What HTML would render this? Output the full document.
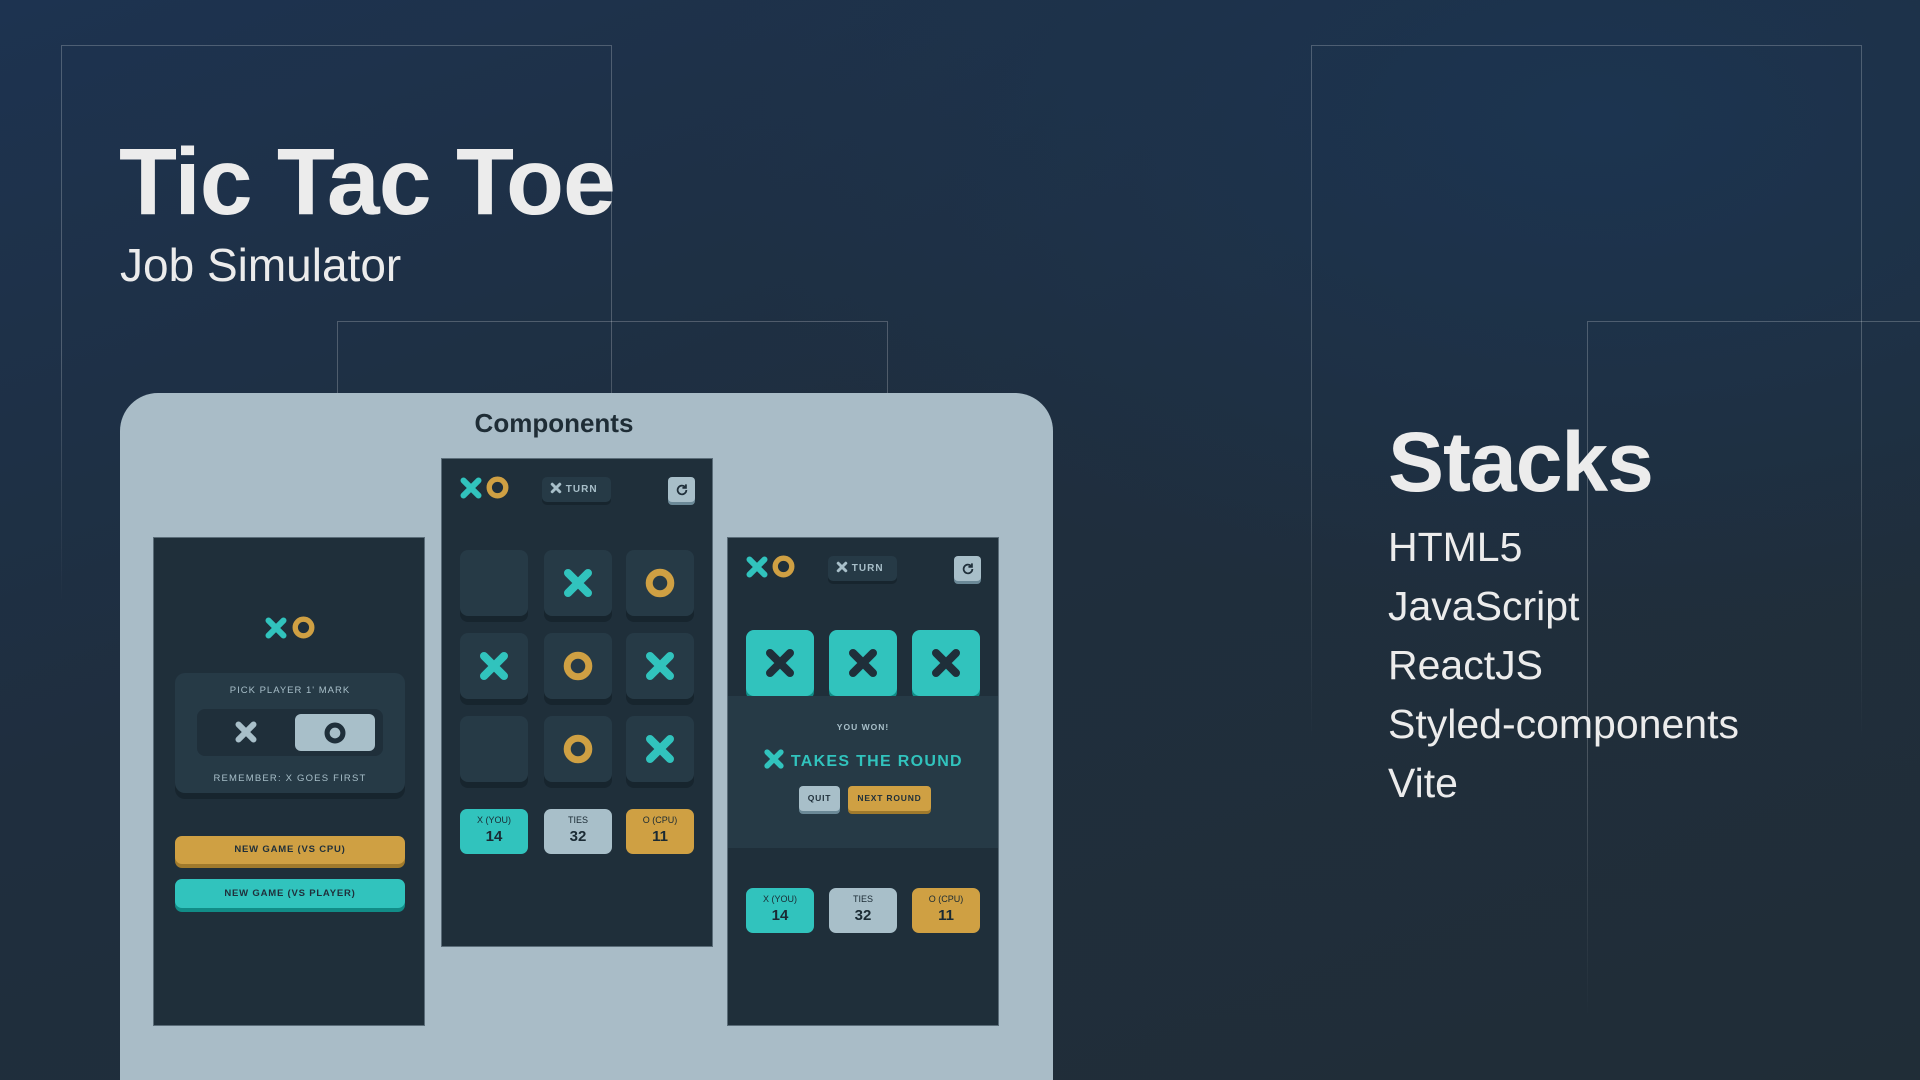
<!DOCTYPE html>
<html style="overflow:hidden;background:#202d37"><head><meta charset="utf-8"><style>
*{margin:0;padding:0;box-sizing:border-box}
html,body{width:1920px;height:1080px;overflow:hidden}
body{position:relative;font-family:"Liberation Sans",sans-serif;
background:radial-gradient(ellipse 900px 500px at 1600px 120px,#1c3450 0%,rgba(28,52,80,0) 100%),linear-gradient(160deg,#1d3350 0%,#1f2e3e 45%,#202d37 100%);}
.fr{position:absolute;border:1px solid rgba(255,255,255,.22);border-bottom:none;
-webkit-mask-image:linear-gradient(#000 55%,transparent);mask-image:linear-gradient(#000 55%,transparent)}
.t1{position:absolute;left:119px;top:128px;font-size:95px;font-weight:bold;color:#ececec;letter-spacing:-1px}
.t2{position:absolute;left:120px;top:238px;font-size:46px;color:#ececec}
.card{position:absolute;left:120px;top:393px;width:933px;height:687px;background:#a9bcc7;border-radius:38px 38px 0 0}
.ct{position:absolute;left:0;width:1108px;top:408px;text-align:center;font-size:26px;font-weight:bold;color:#1f2d36}
.p{position:absolute;width:272px;height:489px;background:#1f2f3a;border:1px solid #5a6c78}
.abs{position:absolute}
.cell{position:absolute;width:68px;height:66px;background:#263a46;border-radius:8px;box-shadow:0 6px 0 #17252e;display:flex;align-items:center;justify-content:center}
.sc{position:absolute;top:350px;width:68px;height:45px;border-radius:7px;text-align:center;color:#1a2a33;font-weight:bold}
.sc i{display:block;font-style:normal;font-size:9px;font-weight:normal;margin-top:6px}
.sc b{display:block;font-size:15px;margin-top:3px}
.stk{position:absolute;left:1388px;color:#ececec}
</style></head><body>
<div class="fr" style="left:61px;top:45px;width:551px;height:560px"></div>
<div class="fr" style="left:337px;top:321px;width:551px;height:200px"></div>
<div class="fr" style="left:1311px;top:45px;width:551px;height:700px"></div>
<div class="fr" style="left:1587px;top:321px;width:400px;height:700px"></div>

<div class="t1">Tic Tac Toe</div>
<div class="t2">Job Simulator</div>

<div class="stk" style="top:414px;font-size:84px;font-weight:bold;letter-spacing:-1px">Stacks</div>
<div class="stk" style="top:518px;font-size:41px;line-height:59px">HTML5<br>JavaScript<br>ReactJS<br>Styled-components<br>Vite</div>

<div class="card"></div>
<div class="ct">Components</div>

<svg width="0" height="0" style="position:absolute"><defs>
<symbol id="x" viewBox="0 0 64 64"><path d="M12 12L52 52M52 12L12 52" stroke="currentColor" stroke-width="16" stroke-linecap="round"/></symbol>
<symbol id="o" viewBox="0 0 64 64"><circle cx="32" cy="32" r="23" fill="none" stroke="currentColor" stroke-width="15"/></symbol>
</defs></svg>

<!-- panel 1 -->
<div class="p" style="left:153px;top:537px">
 <svg class="abs" style="left:110px;top:78px;color:#31c3bd" width="24" height="24"><use href="#x"/></svg>
 <svg class="abs" style="left:138px;top:78px;color:#cfa043" width="23" height="23"><use href="#o"/></svg>
 <div class="abs" style="left:21px;top:135px;width:230px;height:120px;background:#263a46;border-radius:10px;box-shadow:0 6px 0 #17252e"></div>
 <div class="abs" style="left:21px;top:147px;width:230px;text-align:center;font-size:9.5px;letter-spacing:1px;color:#a8bfc9">PICK PLAYER 1' MARK</div>
 <div class="abs" style="left:43px;top:171px;width:186px;height:47px;background:#1f2f3a;border-radius:8px"></div>
 <svg class="abs" style="left:80px;top:182px;color:#a8bfc9" width="24" height="24"><use href="#x"/></svg>
 <div class="abs" style="left:141px;top:176px;width:80px;height:37px;background:#a8bfc9;border-radius:6px"></div>
 <svg class="abs" style="left:170px;top:184px;color:#1f2f3a" width="22" height="22"><use href="#o"/></svg>
 <div class="abs" style="left:21px;top:235px;width:230px;text-align:center;font-size:9.5px;letter-spacing:1.2px;color:#a8bfc9">REMEMBER: X GOES FIRST</div>
 <div class="abs" style="left:21px;top:298px;width:230px;height:28px;background:#cfa043;border-radius:7px;box-shadow:0 4px 0 #a07a2c;text-align:center;line-height:28px;font-size:9.5px;font-weight:bold;color:#1f2f3a;letter-spacing:.8px">NEW GAME (VS CPU)</div>
 <div class="abs" style="left:21px;top:341px;width:230px;height:29px;background:#31c3bd;border-radius:7px;box-shadow:0 4px 0 #118c87;text-align:center;line-height:29px;font-size:9.5px;font-weight:bold;color:#1f2f3a;letter-spacing:.8px">NEW GAME (VS PLAYER)</div>
</div>

<!-- panel 2 -->
<div class="p" style="left:441px;top:458px">
 <svg class="abs" style="left:17px;top:17px;color:#31c3bd" width="24" height="24"><use href="#x"/></svg>
 <svg class="abs" style="left:44px;top:17px;color:#cfa043" width="23" height="23"><use href="#o"/></svg>
 <div class="abs" style="left:100px;top:18px;width:69px;height:25px;background:#263a46;border-radius:5px;box-shadow:0 3px 0 #17252e;color:#a8bfc9;font-size:10px;font-weight:bold;line-height:25px;padding-left:8px;letter-spacing:1px"><svg width="12" height="12" style="vertical-align:-2px;color:#a8bfc9"><use href="#x"/></svg> TURN</div>
 <div class="abs" style="left:226px;top:18px;width:27px;height:25px;background:#a8bfc9;border-radius:4px;box-shadow:0 3px 0 #6b8997;display:flex;align-items:center;justify-content:center"><svg width="14" height="14" viewBox="0 0 16 16"><path d="M13 8a5 5 0 1 1-1.5-3.6" fill="none" stroke="#1f2f3a" stroke-width="2"/><path d="M12.5 1.5v4h-4" fill="none" stroke="#1f2f3a" stroke-width="2"/></svg></div>
 <div class="cell" style="left:18px;top:91px"></div>
 <div class="cell" style="left:102px;top:91px"><svg width="32" height="32" style="color:#31c3bd"><use href="#x"/></svg></div>
 <div class="cell" style="left:184px;top:91px"><svg width="30" height="30" style="color:#cfa043"><use href="#o"/></svg></div>
 <div class="cell" style="left:18px;top:174px"><svg width="32" height="32" style="color:#31c3bd"><use href="#x"/></svg></div>
 <div class="cell" style="left:102px;top:174px"><svg width="30" height="30" style="color:#cfa043"><use href="#o"/></svg></div>
 <div class="cell" style="left:184px;top:174px"><svg width="32" height="32" style="color:#31c3bd"><use href="#x"/></svg></div>
 <div class="cell" style="left:18px;top:257px"></div>
 <div class="cell" style="left:102px;top:257px"><svg width="30" height="30" style="color:#cfa043"><use href="#o"/></svg></div>
 <div class="cell" style="left:184px;top:257px"><svg width="32" height="32" style="color:#31c3bd"><use href="#x"/></svg></div>
 <div class="sc" style="left:18px;background:#31c3bd"><i>X (YOU)</i><b>14</b></div>
 <div class="sc" style="left:102px;background:#a8bfc9"><i>TIES</i><b>32</b></div>
 <div class="sc" style="left:184px;background:#cfa043"><i>O (CPU)</i><b>11</b></div>
</div>

<!-- panel 3 -->
<div class="p" style="left:727px;top:537px">
 <svg class="abs" style="left:17px;top:17px;color:#31c3bd" width="24" height="24"><use href="#x"/></svg>
 <svg class="abs" style="left:44px;top:17px;color:#cfa043" width="23" height="23"><use href="#o"/></svg>
 <div class="abs" style="left:100px;top:18px;width:69px;height:25px;background:#263a46;border-radius:5px;box-shadow:0 3px 0 #17252e;color:#a8bfc9;font-size:10px;font-weight:bold;line-height:25px;padding-left:8px;letter-spacing:1px"><svg width="12" height="12" style="vertical-align:-2px;color:#a8bfc9"><use href="#x"/></svg> TURN</div>
 <div class="abs" style="left:226px;top:18px;width:27px;height:25px;background:#a8bfc9;border-radius:4px;box-shadow:0 3px 0 #6b8997;display:flex;align-items:center;justify-content:center"><svg width="14" height="14" viewBox="0 0 16 16"><path d="M13 8a5 5 0 1 1-1.5-3.6" fill="none" stroke="#1f2f3a" stroke-width="2"/><path d="M12.5 1.5v4h-4" fill="none" stroke="#1f2f3a" stroke-width="2"/></svg></div>
 <div class="cell" style="left:18px;top:92px;background:#31c3bd;box-shadow:0 4px 0 #118c87"><svg width="32" height="32" style="color:#1f2f3a"><use href="#x"/></svg></div>
 <div class="cell" style="left:101px;top:92px;background:#31c3bd;box-shadow:0 4px 0 #118c87"><svg width="32" height="32" style="color:#1f2f3a"><use href="#x"/></svg></div>
 <div class="cell" style="left:184px;top:92px;background:#31c3bd;box-shadow:0 4px 0 #118c87"><svg width="32" height="32" style="color:#1f2f3a"><use href="#x"/></svg></div>
 <div class="abs" style="left:0;top:158px;width:270px;height:152px;background:#263a46"></div>
 <div class="abs" style="left:0;top:184px;width:270px;text-align:center;font-size:8.5px;font-weight:bold;letter-spacing:1px;color:#a8bfc9">YOU WON!</div>
 <div class="abs" style="left:0;top:210px;width:270px;text-align:center;font-size:16px;font-weight:bold;letter-spacing:1.3px;color:#31c3bd"><svg width="22" height="22" style="vertical-align:-4px;color:#31c3bd"><use href="#x"/></svg> TAKES THE ROUND</div>
 <div class="abs" style="left:71px;top:248px;width:41px;height:25px;background:#a8bfc9;border-radius:4px;box-shadow:0 3px 0 #6b8997;text-align:center;line-height:25px;font-size:8.5px;font-weight:bold;color:#1f2f3a;letter-spacing:.8px">QUIT</div>
 <div class="abs" style="left:120px;top:248px;width:83px;height:25px;background:#cfa043;border-radius:4px;box-shadow:0 3px 0 #a07a2c;text-align:center;line-height:25px;font-size:8.5px;font-weight:bold;color:#1f2f3a;letter-spacing:.8px">NEXT ROUND</div>
 <div class="sc" style="left:18px;background:#31c3bd"><i>X (YOU)</i><b>14</b></div>
 <div class="sc" style="left:101px;background:#a8bfc9"><i>TIES</i><b>32</b></div>
 <div class="sc" style="left:184px;background:#cfa043"><i>O (CPU)</i><b>11</b></div>
</div>
</body></html>
